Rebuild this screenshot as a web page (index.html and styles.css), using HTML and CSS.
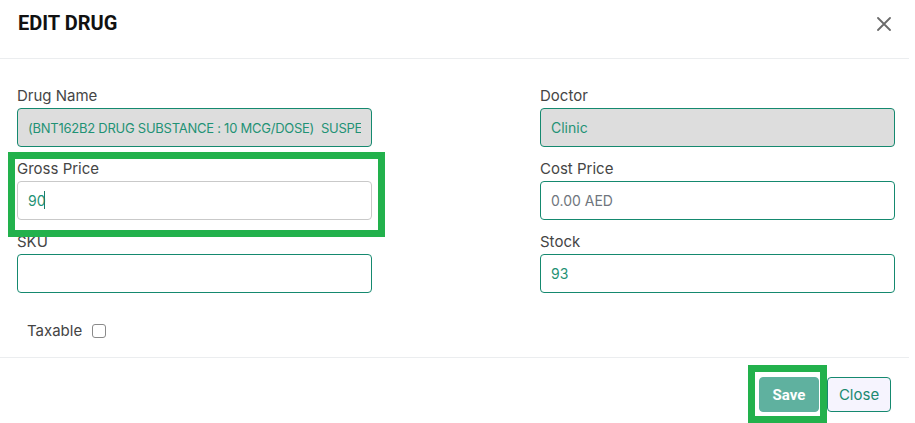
FILE: index.html
```html
<!DOCTYPE html>
<html>
<head>
<meta charset="utf-8">
<link rel="stylesheet" href="styles.css">
</head>
<body>
<div class="modal">
  <div class="modal-header">
    <h1 class="title">EDIT DRUG</h1>
    <button class="close-x" aria-label="Close">
      <svg width="14" height="14" viewBox="0 0 14 14"><path d="M1 1 L13 13 M13 1 L1 13" stroke="#6b6b6b" stroke-width="1.8" stroke-linecap="round"/></svg>
    </button>
  </div>
  <div class="modal-body">
    <div class="grid">
      <div class="field">
        <label class="label">Drug Name</label>
        <input class="input disabled long" type="text" value="(BNT162B2 DRUG SUBSTANCE : 10 MCG/DOSE)  SUSPENSION FOR INJECTION" readonly>
      </div>
      <div class="field">
        <label class="label">Doctor</label>
        <input class="input disabled" type="text" value="Clinic" readonly>
      </div>
      <div class="field">
        <label class="label">Gross Price</label>
        <div class="input-wrap">
          <input class="input plain" type="text" value="90">
          <span class="caret"></span>
        </div>
      </div>
      <div class="field">
        <label class="label">Cost Price</label>
        <input class="input" type="text" placeholder="0.00 AED">
      </div>
      <div class="field">
        <label class="label">SKU</label>
        <input class="input" type="text">
      </div>
      <div class="field">
        <label class="label">Stock</label>
        <input class="input" type="text" value="93">
      </div>
    </div>
    <div class="taxable">
      <span>Taxable</span>
      <span class="checkbox"></span>
    </div>
  </div>
  <div class="modal-footer">
    <button class="btn btn-save">Save</button>
    <button class="btn btn-close">Close</button>
  </div>
  <div class="highlight hl-price"></div>
  <div class="highlight hl-save"></div>
</div>
</body>
</html>
```
FILE: styles.css
```css
* { box-sizing: border-box; }
html, body { margin: 0; padding: 0; background: #fff; }
body { font-family: Inter, "Noto Sans", sans-serif; color: #444; }

.modal { position: relative; width: 909px; height: 423px; background: #fff; }

.modal-header {
  height: 59px;
  padding: 11px 18px 0 18px;
  display: flex;
  justify-content: space-between;
  align-items: flex-start;
  border-bottom: 1px solid #ebedef;
}
.title {
  margin: 0;
  font-family: Roboto, "Liberation Sans", sans-serif;
  font-weight: 700;
  font-size: 20px;
  line-height: 24px;
  color: #111;
}
.close-x {
  margin-top: 6px;
  padding: 0;
  border: 0;
  background: none;
  width: 14px;
  height: 14px;
  display: block;
}
.close-x svg { display: block; }

.modal-body { padding: 28px 14px 0 17px; }
.grid {
  display: grid;
  grid-template-columns: 355px 355px;
  justify-content: space-between;
  row-gap: 13px;
}
.field { display: flex; flex-direction: column; }
.label {
  font-size: 15px;
  line-height: 18px;
  color: #454545;
  margin-bottom: 3px;
}
.input {
  width: 100%;
  height: 39px;
  border: 1px solid #15896f;
  border-radius: 4px;
  padding: 0 10px;
  font-family: Inter, "Noto Sans", sans-serif;
  font-size: 14px;
  color: #1f9275;
  background: #fff;
  outline: none;
}
.input.long { font-size: 13px; letter-spacing: -0.25px; }
.input::placeholder { color: #6f767d; }
.input.disabled { background: #dddddd; }
.input.plain { border-color: #c9c9c9; }
.input-wrap { position: relative; }
.caret {
  position: absolute;
  left: 27px;
  top: 10px;
  width: 1px;
  height: 18px;
  background: #1a7f66;
}

.taxable {
  margin-top: 29px;
  padding-left: 10px;
  display: flex;
  align-items: center;
  gap: 10px;
  font-size: 15px;
  line-height: 18px;
  color: #444;
  height: 18px;
}
.checkbox {
  width: 14px;
  height: 14px;
  border: 1px solid #8a8a8a;
  border-radius: 3px;
  background: #fff;
}

.modal-footer {
  margin-top: 17px;
  border-top: 1px solid #ebedef;
  padding: 19px 18px 0 0;
  display: flex;
  justify-content: flex-end;
  gap: 8px;
}
.btn {
  height: 35px;
  border-radius: 4px;
  font-size: 15px;
  padding: 0;
  cursor: pointer;
}
.btn-save {
  width: 60px;
  background: #5fb19f;
  border: 1px solid #5fb19f;
  color: #fff;
  font-family: Roboto, "Liberation Sans", sans-serif;
  font-weight: 700;
}
.btn-close {
  width: 64px;
  background: #f6f4fe;
  border: 1px solid #15896f;
  color: #1a8a70;
  font-family: Inter, "Noto Sans", sans-serif;
}

.highlight {
  position: absolute;
  border: 7px solid #22b14c;
  pointer-events: none;
}
.hl-price { left: 8px; top: 152px; width: 377px; height: 85px; }
.hl-save { left: 748px; top: 365px; width: 79px; height: 58px; }
```
